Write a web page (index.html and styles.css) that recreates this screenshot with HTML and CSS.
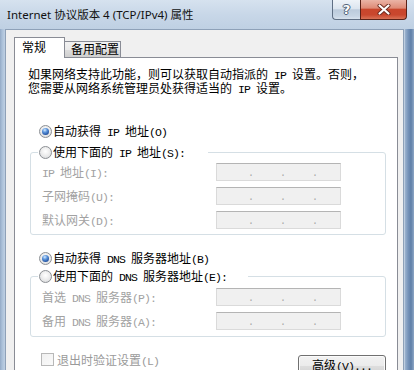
FILE: index.html
```html
<!DOCTYPE html>
<html lang="zh-CN">
<head>
<meta charset="utf-8">
<title>Internet 协议版本 4 (TCP/IPv4) 属性</title>
<link rel="stylesheet" href="styles.css">
</head>
<body>
<div class="window">
  <div class="titlebar">
    <span class="title">Internet 协议版本 4 (TCP/IPv4) 属性</span>
    <div class="caption-btns">
      <div class="cbtn help"><span>?</span></div>
      <div class="cbtn close">
        <svg width="14" height="11" viewBox="0 0 14 11">
          <path d="M2.5 1.5 L11.5 9.5 M11.5 1.5 L2.5 9.5" stroke="#6b2a1e" stroke-width="4" stroke-linecap="round"/>
          <path d="M2.5 1.5 L11.5 9.5 M11.5 1.5 L2.5 9.5" stroke="#ffffff" stroke-width="2.2" stroke-linecap="round"/>
        </svg>
      </div>
    </div>
  </div>
  <div class="client">
    <div class="tabs">
      <div class="tab active">常规</div>
      <div class="tab">备用配置</div>
    </div>
    <div class="panel">
      <p class="intro">如果网络支持此功能，则可以获取自动指派的<span class="a"> IP </span>设置。否则，<br>您需要从网络系统管理员处获得适当的<span class="a"> IP </span>设置。</p>

      <div class="opt"><span class="radio checked"></span><span>自动获得<span class="a"> IP </span>地址<span class="a">(O)</span></span></div>

      <fieldset class="group">
        <legend class="opt legend-ip"><span class="radio"></span><span>使用下面的<span class="a"> IP </span>地址<span class="a">(S):</span></span></legend>
        <div class="fields">
          <span class="lbl"><span class="a">IP </span>地址<span class="a">(I):</span></span>
          <div class="ip"><i></i><b>.</b><i></i><b>.</b><i></i><b>.</b><i></i></div>
          <span class="lbl">子网掩码<span class="a">(U):</span></span>
          <div class="ip"><i></i><b>.</b><i></i><b>.</b><i></i><b>.</b><i></i></div>
          <span class="lbl">默认网关<span class="a">(D):</span></span>
          <div class="ip"><i></i><b>.</b><i></i><b>.</b><i></i><b>.</b><i></i></div>
        </div>
      </fieldset>

      <div class="opt opt-dns"><span class="radio checked"></span><span>自动获得<span class="a"> DNS </span>服务器地址<span class="a">(B)</span></span></div>

      <fieldset class="group group-dns">
        <legend class="opt legend-dns"><span class="radio"></span><span>使用下面的<span class="a"> DNS </span>服务器地址<span class="a">(E):</span></span></legend>
        <div class="fields">
          <span class="lbl">首选<span class="a"> DNS </span>服务器<span class="a">(P):</span></span>
          <div class="ip"><i></i><b>.</b><i></i><b>.</b><i></i><b>.</b><i></i></div>
          <span class="lbl">备用<span class="a"> DNS </span>服务器<span class="a">(A):</span></span>
          <div class="ip"><i></i><b>.</b><i></i><b>.</b><i></i><b>.</b><i></i></div>
        </div>
      </fieldset>

      <div class="bottom">
        <div class="check"><span class="box"></span><span>退出时验证设置<span class="a">(L)</span></span></div>
        <div class="btn">高级<span class="a">(V)...</span></div>
      </div>
    </div>
  </div>
</div>
</body>
</html>
```

FILE: styles.css
```css
* { box-sizing: border-box; }
html, body { margin: 0; padding: 0; }
body {
  width: 414px;
  height: 370px;
  overflow: hidden;
  font-family: "Noto Sans CJK SC", sans-serif;
  font-size: 12px;
  color: #000;
  background: #c8d7e8;
}
.window {
  height: 370px;
  display: flex;
  flex-direction: column;
  background:
    linear-gradient(90deg, #93aac6 0px, #a9bfd8 2px, #b8cbe0 4px, #c5d4e6 6px, #d0dcea 50%, #c6d5e6 403px, #dfe7f0 404px, #9db4cf 405px, #7895ba 408px, #5f7fa8 411px, #8ea7c6 414px);
}
.titlebar {
  height: 29px;
  display: flex;
  align-items: flex-start;
  background: linear-gradient(180deg, #d6e2ef 0%, #c8d7e8 50%, #bfd0e3 100%);
}
.title {
  font-family: "Noto Sans", "Noto Sans CJK SC", sans-serif;
  font-size: 11.5px;
  line-height: 29px;
  padding-left: 7px;
  color: #111;
}
.caption-btns {
  margin-left: auto;
  margin-right: 7px;
  display: flex;
}
.cbtn {
  height: 20px;
  border: 1px solid #5f6f84;
  border-top: none;
  display: flex;
  align-items: center;
  justify-content: center;
}
.help {
  width: 28px;
  border-right: none;
  border-radius: 0 0 0 4px;
  background: linear-gradient(180deg, #eef3f8 0%, #dce5ef 45%, #bccbdc 52%, #c7d5e4 85%, #d9e3ee 100%);
}
.help span {
  font-family: "DejaVu Sans", sans-serif;
  font-weight: bold;
  font-size: 13px;
  color: #fff;
  line-height: 1;
  margin-top: -1px;
  text-shadow: 0 0 1px #3c4a5c, 1px 0 0 #56667c, -1px 0 0 #56667c, 0 1px 0 #56667c, 0 -1px 0 #56667c;
}
.close {
  width: 47px;
  border-color: #5a2218;
  border-radius: 0 0 4px 0;
  background: linear-gradient(180deg, #eab4a6 0%, #de8b77 42%, #c9462c 50%, #c9472e 78%, #d97256 100%);
}
.close svg { display: block; }

.client {
  flex: 1;
  margin: 0 10px 0 5px;
  background: #f0f0f0;
  border: 1px solid #8ea1b8;
  border-bottom: none;
  padding: 7px 5px 0 8px;
  display: flex;
  flex-direction: column;
  min-height: 0;
}
.tabs {
  display: flex;
  align-items: flex-end;
}
.tab {
  border: 1px solid #898c95;
  border-bottom: none;
}
.tab.active {
  position: relative;
  z-index: 1;
  width: 51px;
  height: 21px;
  margin-bottom: -1px;
  padding: 0 0 2px 7px;
  line-height: 18px;
  background: #fff;
}
.tab:not(.active) {
  width: 56px;
  height: 16px;
  border-left: none;
  padding-left: 6px;
  line-height: 14px;
  background: linear-gradient(180deg, #f2f2f2 0%, #ebebeb 50%, #dddddd 51%, #cfcfcf 100%);
}
.panel {
  flex: 1;
  background: #fff;
  border: 1px solid #898c95;
  border-bottom: none;
  padding: 0 11px 0 15px;
  display: flex;
  flex-direction: column;
}
.a {
  font-family: "Liberation Mono", monospace;
  font-size: 11.5px;
  letter-spacing: -0.9px;
  line-height: 0;
  white-space: pre;
}
.intro {
  margin: 9px 0 0 -2px;
  line-height: 14px;
}
.opt {
  display: flex;
  align-items: center;
  gap: 1px;
  height: 16px;
  line-height: 16px;
  margin: 28px 0 0 9px;
}
.opt-dns { margin-top: 15px; }
.radio {
  width: 13px;
  height: 13px;
  border-radius: 50%;
  border: 1px solid #8c8f94;
  background: radial-gradient(circle at 50% 40%, #ffffff 0%, #f0f0f0 40%, #d4d6d8 100%);
  display: flex;
  align-items: center;
  justify-content: center;
  flex: none;
}
.radio.checked::after {
  content: "";
  width: 7px;
  height: 7px;
  border-radius: 50%;
  background: radial-gradient(circle at 40% 30%, #d6ebff 0%, #5d96dc 35%, #2a5aa8 70%, #173e7c 100%);
}
.group {
  margin: 5px 0 0 0;
  padding: 0;
  border: 1px solid #d5dfe5;
  border-radius: 3px;
  min-width: 0;
}
.group-dns { margin-top: 2px; }
.group legend {
  margin: 0 0 0 7px;
  padding: 0 0 0 1px;
  width: 170px;
  background: #fff;
}
.group legend.legend-dns { width: 210px; }
.fields {
  display: grid;
  grid-template-columns: 174px 125px;
  grid-auto-rows: 18px;
  row-gap: 6px;
  align-items: center;
  padding: 3px 0 5px 11px;
}
.group-dns .fields { padding: 4px 0 6px 11px; }
.lbl {
  color: #a2a2a2;
  line-height: 14px;
}
.ip {
  height: 18px;
  background: #f0f0f0;
  border: 1px solid #dadada;
  border-top-color: #b4b4b4;
  display: flex;
  align-items: flex-end;
}
.ip i { width: 28px; flex: none; }
.ip i:first-child { width: 31px; }
.ip b {
  width: 4px;
  flex: none;
  font-weight: normal;
  font-family: "Liberation Mono", monospace;
  font-size: 10px;
  line-height: 13px;
  text-align: center;
  color: #a8a8a8;
}
.bottom {
  margin-top: 16px;
  display: flex;
  justify-content: space-between;
  align-items: flex-start;
}
.check {
  margin-left: 11px;
  display: flex;
  align-items: center;
  gap: 3px;
  height: 13px;
  line-height: 13px;
  color: #9a9a9a;
}
.box {
  width: 13px;
  height: 13px;
  border: 1px solid #b8b8b8;
  background: linear-gradient(135deg, #f0f0f0, #fafafa);
}
.btn {
  margin-top: 2px;
  width: 88px;
  height: 23px;
  border: 1px solid #707070;
  border-radius: 3px;
  box-shadow: inset 0 0 0 1px #fbfbfb;
  background: linear-gradient(180deg, #f2f2f2 0%, #ebebeb 48%, #dddddd 50%, #cfcfcf 100%);
  text-align: center;
  line-height: 17px;
}
```
